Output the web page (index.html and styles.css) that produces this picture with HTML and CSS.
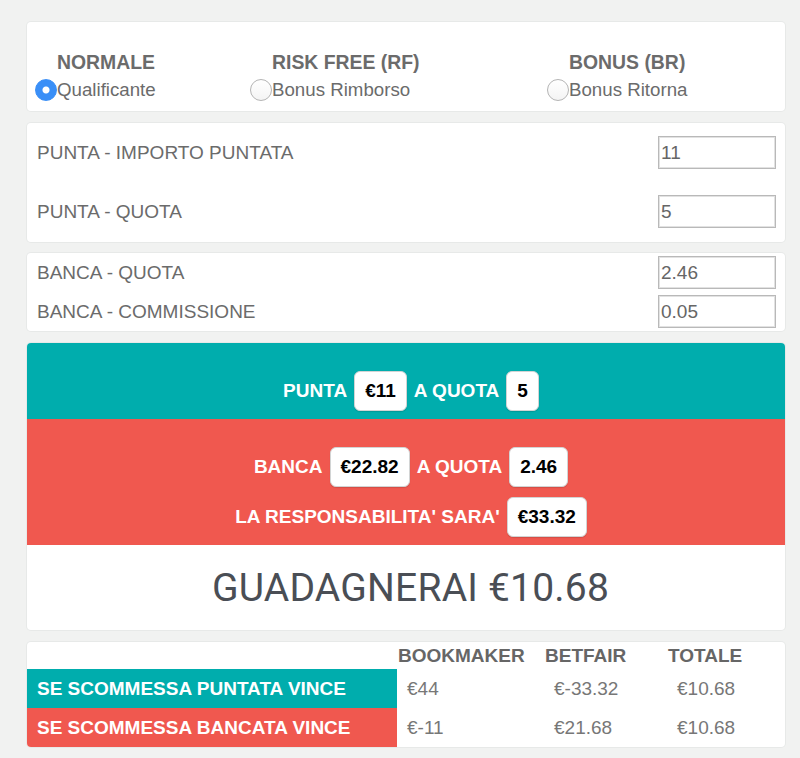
FILE: index.html
```html
<!DOCTYPE html>
<html>
<head>
<title>Calcolatore Matched Betting</title>
<link rel="stylesheet" href="styles.css">
</head>

<body>

<div class="mainContainer">

<div class="card modes">
<label class="mode">
<span class="modeTitle">NORMALE</span>
<input type="radio" name="mode" checked>
<span class="modeLabel">Qualificante</span>
</label>
<label class="mode">
<span class="modeTitle">RISK FREE (RF)</span>
<input type="radio" name="mode">
<span class="modeLabel">Bonus Rimborso</span>
</label>
<label class="mode">
<span class="modeTitle">BONUS (BR)</span>
<input type="radio" name="mode">
<span class="modeLabel">Bonus Ritorna</span>
</label>
</div>

<div class="card fields puntaFields">
<div class="fieldRow">
<span>PUNTA - IMPORTO PUNTATA</span>
<input class="field" type="text" value="11">
</div>
<div class="fieldRow">
<span>PUNTA - QUOTA</span>
<input class="field" type="text" value="5">
</div>
</div>

<div class="card fields bancaFields">
<div class="fieldRow">
<span>BANCA - QUOTA</span>
<input class="field" type="text" value="2.46">
</div>
<div class="fieldRow">
<span>BANCA - COMMISSIONE</span>
<input class="field" type="text" value="0.05">
</div>
</div>

<div class="card result">
<div class="band puntaBand">
<div class="bandLine">PUNTA <span class="badge">€11</span> A QUOTA <span class="badge">5</span></div>
</div>
<div class="band bancaBand">
<div class="bandLine">BANCA <span class="badge">€22.82</span> A QUOTA <span class="badge">2.46</span></div>
<div class="bandLine">LA RESPONSABILITA' SARA' <span class="badge">€33.32</span></div>
</div>
<div class="profit">GUADAGNERAI €10.68</div>
</div>

<div class="card summary">
<div class="head"></div>
<div class="head">BOOKMAKER</div>
<div class="head">BETFAIR</div>
<div class="head">TOTALE</div>

<div class="rowTitle puntaBand">SE SCOMMESSA PUNTATA VINCE</div>
<div class="cell">€44</div>
<div class="cell">€-33.32</div>
<div class="cell">€10.68</div>

<div class="rowTitle bancaBand">SE SCOMMESSA BANCATA VINCE</div>
<div class="cell">€-11</div>
<div class="cell">€21.68</div>
<div class="cell">€10.68</div>
</div>

</div>

</body>
</html>
```

FILE: styles.css
```css
body {
    margin: 0;
    background-color: #f1f2f1;
    font: 19px "Liberation Sans", Arial, sans-serif;
    color: #6b6b6b;
}
.mainContainer {
    width: 758px;
    margin-left: 27px;
    padding-top: 22px;
}
.card {
    background-color: #fff;
    border-radius: 4px;
    box-shadow: 0 0 0 1px #e7e9e8;
    margin-bottom: 12px;
}

/* mode selection */
.modes {
    display: grid;
    grid-template-columns: 215px 297px 1fr;
    padding: 27px 8px 8px;
}
.mode {
    display: grid;
    grid-template-columns: 22px auto;
    grid-template-rows: 27px 27px;
    align-items: center;
    justify-content: start;
}
.modeTitle {
    grid-column: 2;
    font-weight: bold;
    font-size: 19.4px;
}
.modeLabel {
    grid-column: 2;
    font-size: 18.7px;
}
.mode input {
    -webkit-appearance: none;
    appearance: none;
    grid-column: 1;
    width: 22px;
    height: 22px;
    margin: 0;
    border-radius: 50%;
    border: 1px solid #b4b4b4;
    background: linear-gradient(#fff, #f4f4f4);
}
.mode input:checked {
    border-color: #3a8ff7;
    background: radial-gradient(circle, #fff 3px, #3a8ff7 4px);
}

/* input rows */
.fields {
    display: flex;
    flex-direction: column;
    padding: 13px 9px 14px 10px;
    gap: 26px;
}
.puntaFields {
    margin-bottom: 11px;
}
.bancaFields {
    padding: 3px 9px 3px 10px;
    gap: 6px;
}
.fieldRow {
    display: flex;
    justify-content: space-between;
    align-items: center;
}
.field {
    box-sizing: border-box;
    width: 118px;
    height: 33px;
    margin: 0;
    padding: 0 2px;
    border: 1px solid #b9b9b9;
    box-shadow: inset 0 0 0 1px #e2e2e2;
    font: 19px "Liberation Sans", Arial, sans-serif;
    color: #666;
}

/* result */
.result {
    overflow: hidden;
}
.band {
    display: flex;
    flex-direction: column;
    gap: 10px;
    padding: 28px 0 8px 10px;
}
.puntaBand {
    background-color: #00adad;
}
.bancaBand {
    background-color: #f0584f;
}
.bandLine {
    display: flex;
    justify-content: center;
    align-items: center;
    gap: 7px;
    font-weight: bold;
    color: #fff;
}
.badge {
    padding: 8px 10px;
    line-height: 22px;
    background-color: #fff;
    color: #000;
    border: 1px solid #d2d4d4;
    border-radius: 6px;
    box-shadow: 0 1px 1px rgba(0, 0, 0, 0.12);
}
.profit {
    height: 85px;
    display: flex;
    justify-content: center;
    align-items: center;
    padding-left: 9px;
    font: 39px Roboto, "Liberation Sans", sans-serif;
    letter-spacing: 0.2px;
    color: #4a4e55;
}

/* summary table */
.summary {
    display: grid;
    grid-template-columns: 370px 147px 123px 1fr;
    grid-template-rows: 27px 39px 39px;
    align-items: center;
    overflow: hidden;
}
.head {
    padding-left: 1px;
    font-weight: bold;
    color: #666;
}
.rowTitle {
    height: 100%;
    display: flex;
    align-items: center;
    padding-left: 10px;
    font-weight: bold;
    color: #fff;
}
.cell {
    padding-left: 10px;
    color: #777;
}
```
